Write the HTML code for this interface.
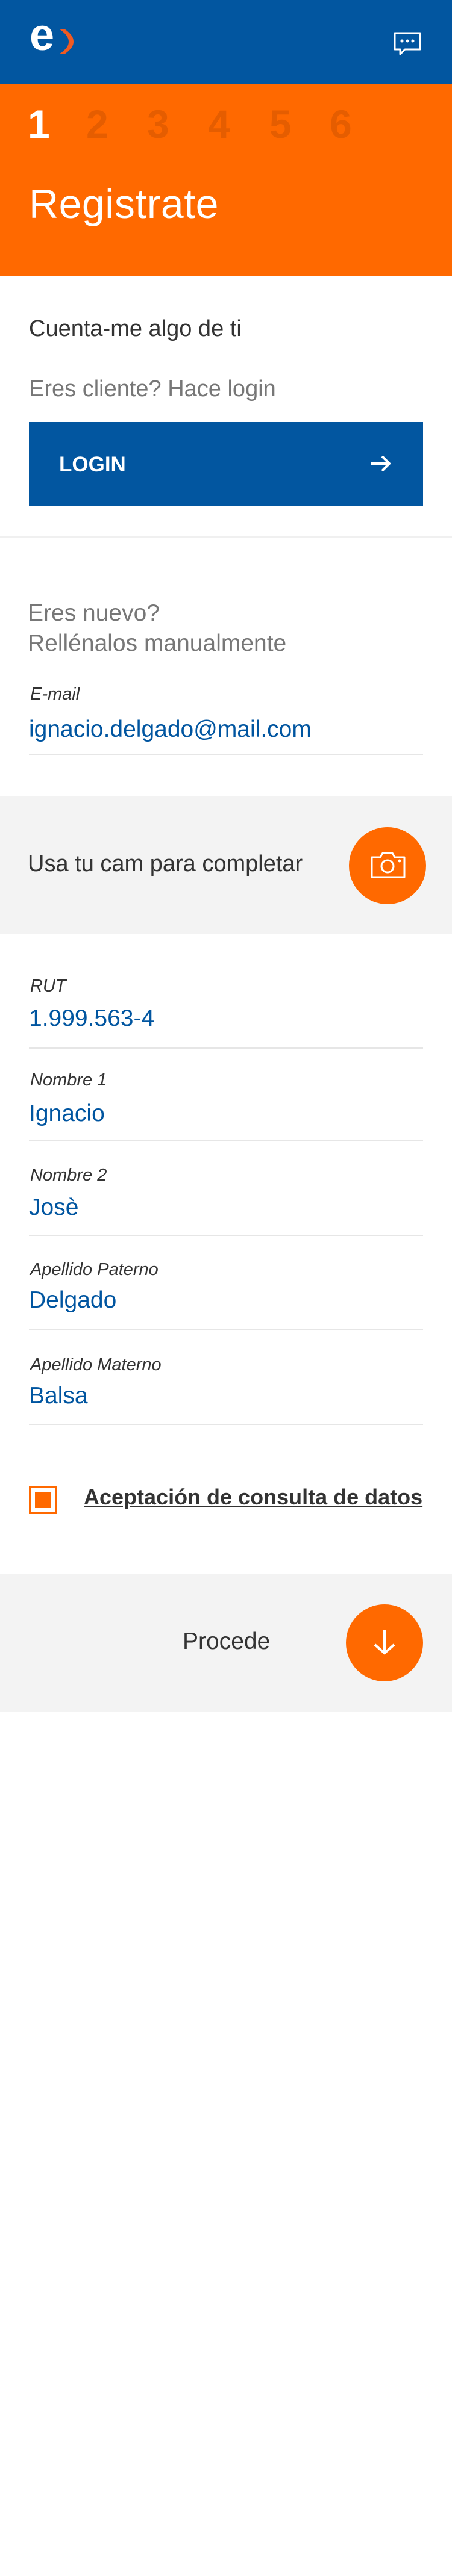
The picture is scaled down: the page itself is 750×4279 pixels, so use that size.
<!DOCTYPE html>
<html><head><meta charset="utf-8"><style>
*{margin:0;padding:0;box-sizing:border-box}
body{width:750px;height:4279px;background:#fff;font-family:"Liberation Sans",sans-serif;position:relative;overflow:hidden}
.a{position:absolute;white-space:nowrap}
.lbl{font-size:29px;font-style:italic;color:#333;left:50px}
.val{font-size:39px;color:#0055a0;left:48px}
.ln{position:absolute;left:48px;width:654px;height:2px;background:#e6e6e6}
</style></head><body>
<div class="a" style="left:0;top:0;width:750px;height:139px;background:#0256a0"></div>
<div class="a" style="left:49px;top:18px;font-size:74px;font-weight:bold;color:#fff;line-height:80px">e</div>
<svg class="a" style="left:96px;top:46px" width="28" height="46" viewBox="0 0 28 46">
<path d="M2 2 C14 10 18 17 18 23 C18 30 14 36 2 44 L11 44 C22 36 26 30 26 23 C26 16 22 10 11 2 Z" fill="#f05a22"/>
</svg>
<svg class="a" style="left:652px;top:52px" width="48" height="44" viewBox="0 0 48 44">
<path d="M3 3 H45 V30 H20 L12 38 V30 H3 Z" fill="none" stroke="#fff" stroke-width="3" stroke-linejoin="round"/>
<circle cx="15" cy="16" r="2.5" fill="#fff"/><circle cx="24" cy="16" r="2.5" fill="#fff"/><circle cx="33" cy="16" r="2.5" fill="#fff"/>
</svg>
<div class="a" style="left:0;top:139px;width:750px;height:320px;background:#ff6900"></div>
<div class="a" style="top:168px;left:46px;font-size:66px;font-weight:bold;color:#fff">1</div>
<div class="a" style="top:168px;left:143px;font-size:66px;font-weight:bold;color:#e55d00">2</div>
<div class="a" style="top:168px;left:244px;font-size:66px;font-weight:bold;color:#e55d00">3</div>
<div class="a" style="top:168px;left:345px;font-size:66px;font-weight:bold;color:#e55d00">4</div>
<div class="a" style="top:168px;left:447px;font-size:66px;font-weight:bold;color:#e55d00">5</div>
<div class="a" style="top:168px;left:547px;font-size:66px;font-weight:bold;color:#e55d00">6</div>
<div class="a" style="top:300px;left:48px;font-size:68px;color:#fff;letter-spacing:0.5px">Registrate</div>
<div class="a" style="top:525px;left:48px;font-size:38px;color:#333">Cuenta-me algo de ti</div>
<div class="a" style="top:625px;left:48px;font-size:38px;color:#777">Eres cliente? Hace login</div>
<div class="a" style="left:48px;top:701px;width:654px;height:140px;background:#0256a0"></div>
<div class="a" style="left:98px;top:752px;font-size:35px;font-weight:bold;color:#fff">LOGIN</div>
<svg class="a" style="left:614px;top:755px" width="36" height="30" viewBox="0 0 36 30"><path d="M2 15 H32 M20 3 L32 15 L20 27" fill="none" stroke="#fff" stroke-width="4"/></svg>
<div class="a" style="left:0;top:890px;width:750px;height:3px;background:#f0f0f0"></div>
<div class="a" style="top:994px;left:46px;font-size:39px;color:#777;line-height:50px;white-space:normal">Eres nuevo?<br>Rellénalos manualmente</div>
<div class="a lbl" style="top:1137px">E-mail</div>
<div class="a val" style="top:1190px">ignacio.delgado@mail.com</div>
<div class="ln" style="top:1252px"></div>
<div class="a" style="left:0;top:1322px;width:750px;height:229px;background:#f3f3f3"></div>
<div class="a" style="top:1414px;left:46px;font-size:38px;color:#333">Usa tu cam para completar</div>
<div class="a" style="left:579px;top:1374px;width:128px;height:128px;border-radius:50%;background:#ff6900"></div>
<svg class="a" style="left:613px;top:1414px" width="62" height="46" viewBox="0 0 62 46">
<path d="M4 10 H18 L22 3 H38 L42 10 H58 V43 H4 Z" fill="none" stroke="#fff" stroke-width="3" stroke-linejoin="round"/>
<circle cx="30" cy="25" r="10" fill="none" stroke="#fff" stroke-width="3"/><circle cx="50" cy="16" r="2.5" fill="#fff"/></svg>
<div class="a lbl" style="top:1622px">RUT</div>
<div class="a val" style="top:1670px">1.999.563-4</div>
<div class="ln" style="top:1740px"></div>
<div class="a lbl" style="top:1778px">Nombre 1</div>
<div class="a val" style="top:1828px">Ignacio</div>
<div class="ln" style="top:1894px"></div>
<div class="a lbl" style="top:1936px">Nombre 2</div>
<div class="a val" style="top:1984px">Josè</div>
<div class="ln" style="top:2051px"></div>
<div class="a lbl" style="top:2093px">Apellido Paterno</div>
<div class="a val" style="top:2138px">Delgado</div>
<div class="ln" style="top:2207px"></div>
<div class="a lbl" style="top:2251px">Apellido Materno</div>
<div class="a val" style="top:2297px">Balsa</div>
<div class="ln" style="top:2365px"></div>
<div class="a" style="left:48px;top:2469px;width:46px;height:46px;border:3px solid #ff6900;padding:7px"><div style="width:100%;height:100%;background:#ff6900"></div></div>
<div class="a" style="left:139px;top:2466px;font-size:36px;font-weight:bold;color:#333;text-decoration:underline">Aceptación de consulta de datos</div>
<div class="a" style="left:0;top:2614px;width:750px;height:230px;background:#f3f3f3"></div>
<div class="a" style="left:303px;top:2705px;font-size:39px;color:#333">Procede</div>
<div class="a" style="left:574px;top:2665px;width:128px;height:128px;border-radius:50%;background:#ff6900"></div>
<svg class="a" style="left:618px;top:2706px" width="40" height="46" viewBox="0 0 40 46"><path d="M20 2 V40 M4 26 L20 40 L36 26" fill="none" stroke="#fff" stroke-width="4"/></svg>
</body></html>
